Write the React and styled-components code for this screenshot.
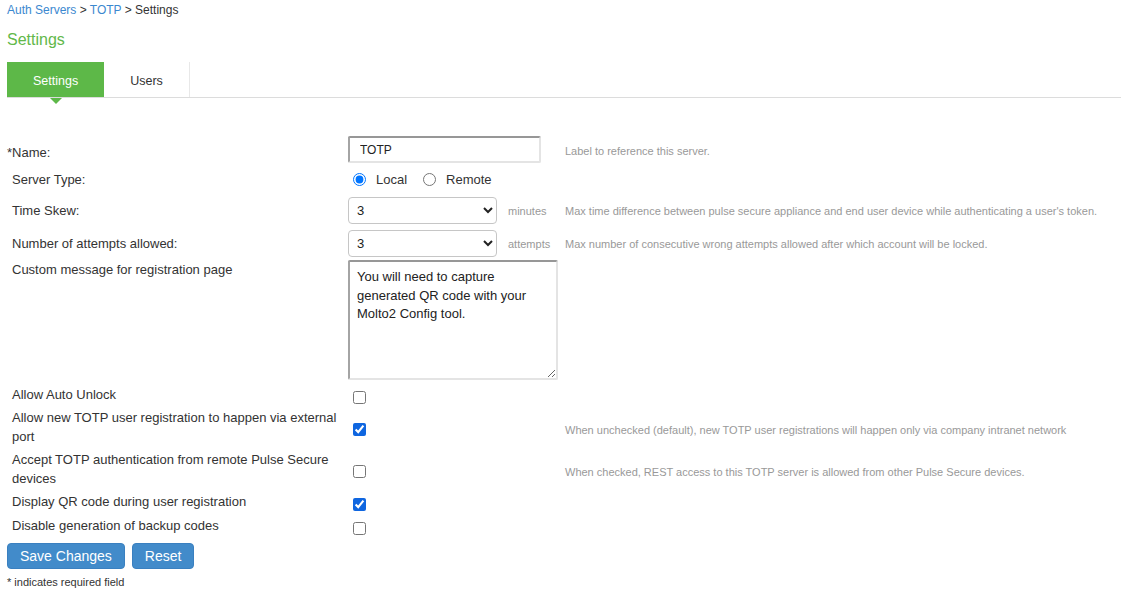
import styled, { createGlobalStyle } from "styled-components";

const GlobalStyle = createGlobalStyle`
  html, body {
    margin: 0;
    padding: 0;
    background: #fff;
  }
  body {
    font-family: "Liberation Sans", Arial, sans-serif;
    font-size: 13px;
    color: #333;
  }
`;

const Page = styled.div`
  padding: 0 1px 0 7px;
`;

const Breadcrumb = styled.div`
  font-size: 12px;
  line-height: 20px;
  color: #333;
`;

const Crumb = styled.a`
  color: #3b88cf;
  text-decoration: none;
`;

const Heading = styled.h1`
  margin: 10px 0 12px;
  font-size: 16px;
  line-height: 20px;
  font-weight: normal;
  color: #62b84a;
`;

const TabBar = styled.div`
  display: flex;
  border-bottom: 1px solid #dcdcdc;
`;

const Tab = styled.div`
  position: relative;
  height: 35px;
  padding: 2px 26px 0;
  box-sizing: border-box;
  display: flex;
  align-items: center;
  font-size: 12.5px;
  color: ${(p) => (p.$active ? "#fff" : "#333")};
  background: ${(p) => (p.$active ? "#5db848" : "transparent")};
  border-right: ${(p) => (p.$active ? "none" : "1px solid #e8e8e8")};

  &::after {
    content: "";
    display: ${(p) => (p.$active ? "block" : "none")};
    position: absolute;
    left: 50%;
    bottom: -7px;
    margin-left: -6px;
    border-left: 6px solid transparent;
    border-right: 6px solid transparent;
    border-top: 6px solid #5db848;
  }
`;

const Form = styled.form`
  margin-top: 38px;
  display: flex;
  flex-direction: column;
`;

const Row = styled.div`
  display: grid;
  grid-template-columns: 341px 217px 1fr;
  align-items: center;
  min-height: ${(p) => p.$h || 19}px;
  margin-top: ${(p) => p.$mt || 0}px;
`;

const Label = styled.div`
  padding: ${(p) => (p.$pt ? `${p.$pt}px` : 0)} 8px 0 5px;
  line-height: 19px;
  font-size: 13px;
  align-self: ${(p) => (p.$top ? "start" : "center")};
`;

const Req = styled.span`
  margin-left: -5px;
`;

const Control = styled.div`
  display: flex;
  align-items: center;
  align-self: ${(p) => (p.$top ? "start" : "center")};
`;

const TextInput = styled.input`
  box-sizing: border-box;
  width: 193px;
  height: 27px;
  padding: 0 10px;
  border: 2px solid #e4e4e4;
  border-top-color: #979797;
  border-left-color: #a4a4a4;
  border-radius: 2px;
  font-family: inherit;
  font-size: 12px;
  color: #222;
  outline: none;
`;

const Radio = styled.label`
  display: inline-flex;
  align-items: center;
  font-size: 13px;
  margin-right: 11px;

  input {
    margin: 0 10px 0 5px;
    width: 13px;
    height: 13px;
  }
`;

const Select = styled.select`
  box-sizing: border-box;
  width: 149px;
  height: 27px;
  padding: 0 4px;
  border: 1px solid #c6c6c6;
  border-radius: 4px;
  background: #fff;
  font-family: inherit;
  font-size: 13px;
  color: #222;
`;

const Unit = styled.span`
  margin-left: 11px;
  font-size: 11px;
  color: #999;
`;

const Help = styled.div`
  padding-top: ${(p) => p.$pt || 0}px;
  font-size: 11px;
  color: #999;
`;

const TextArea = styled.textarea`
  box-sizing: border-box;
  width: 210px;
  height: 120px;
  padding: 6px 20px 6px 7px;
  border: 2px solid #e4e4e4;
  border-top-color: #979797;
  border-left-color: #a4a4a4;
  border-radius: 2px;
  font-family: inherit;
  font-size: 13px;
  line-height: 18.5px;
  color: #222;
  outline: none;
`;

const Check = styled.input`
  margin: 5px 0 0 5px;
  width: 13px;
  height: 13px;
  accent-color: #0f66e0;
`;

const Buttons = styled.div`
  display: flex;
  gap: 7px;
  margin-top: 8px;
`;

const Button = styled.button`
  height: 26px;
  padding: 0 12px;
  border: 1px solid #3a80c0;
  border-radius: 4px;
  background: #428bca;
  color: #fff;
  font-family: inherit;
  font-size: 14px;
`;

const Note = styled.div`
  margin-top: 6px;
  font-size: 11px;
  line-height: 14px;
`;

const checks = [
  { label: "Allow Auto Unlock", checked: false, mt: 5 },
  {
    label: "Allow new TOTP user registration to happen via external port",
    checked: true,
    help: "When unchecked (default), new TOTP user registrations will happen only via company intranet network",
  },
  {
    label: "Accept TOTP authentication from remote Pulse Secure devices",
    checked: false,
    help: "When checked, REST access to this TOTP server is allowed from other Pulse Secure devices.",
  },
  { label: "Display QR code during user registration", checked: true },
  { label: "Disable generation of backup codes", checked: false, mt: 5 },
];

export default function App() {
  return (
    <Page>
      <GlobalStyle />
      <Breadcrumb>
        <Crumb href="#">Auth Servers</Crumb> &gt; <Crumb href="#">TOTP</Crumb> &gt; Settings
      </Breadcrumb>
      <Heading>Settings</Heading>

      <TabBar>
        <Tab $active>Settings</Tab>
        <Tab>Users</Tab>
      </TabBar>

      <Form onSubmit={(e) => e.preventDefault()}>
        <Row $h={27}>
          <Label $pt={5}>
            <Req>*</Req>Name:
          </Label>
          <Control>
            <TextInput defaultValue="TOTP" />
          </Control>
          <Help $pt={3}>Label to reference this server.</Help>
        </Row>

        <Row $h={26} $mt={3}>
          <Label>Server Type:</Label>
          <Control>
            <Radio>
              <input type="radio" name="type" defaultChecked />
              Local
            </Radio>
            <Radio>
              <input type="radio" name="type" />
              Remote
            </Radio>
          </Control>
          <div />
        </Row>

        <Row $h={27} $mt={5}>
          <Label>Time Skew:</Label>
          <Control>
            <Select defaultValue="3">
              <option>1</option>
              <option>2</option>
              <option>3</option>
              <option>4</option>
              <option>5</option>
            </Select>
            <Unit>minutes</Unit>
          </Control>
          <Help>
            Max time difference between pulse secure appliance and end user device while
            authenticating a user's token.
          </Help>
        </Row>

        <Row $h={27} $mt={6}>
          <Label>Number of attempts allowed:</Label>
          <Control>
            <Select defaultValue="3">
              <option>1</option>
              <option>2</option>
              <option>3</option>
              <option>4</option>
              <option>5</option>
            </Select>
            <Unit>attempts</Unit>
          </Control>
          <Help>Max number of consecutive wrong attempts allowed after which account will be locked.</Help>
        </Row>

        <Row $h={120} $mt={3}>
          <Label $top>Custom message for registration page</Label>
          <Control $top>
            <TextArea defaultValue="You will need to capture generated QR code with your Molto2 Config tool." />
          </Control>
          <div />
        </Row>

        {checks.map((c, i) => (
          <Row key={i} $mt={c.mt || 4}>
            <Label>{c.label}</Label>
            <Control>
              <Check type="checkbox" defaultChecked={c.checked} />
            </Control>
            <Help $pt={5}>{c.help}</Help>
          </Row>
        ))}

        <Buttons>
          <Button type="submit">Save Changes</Button>
          <Button type="reset">Reset</Button>
        </Buttons>
        <Note>* indicates required field</Note>
      </Form>
    </Page>
  );
}
